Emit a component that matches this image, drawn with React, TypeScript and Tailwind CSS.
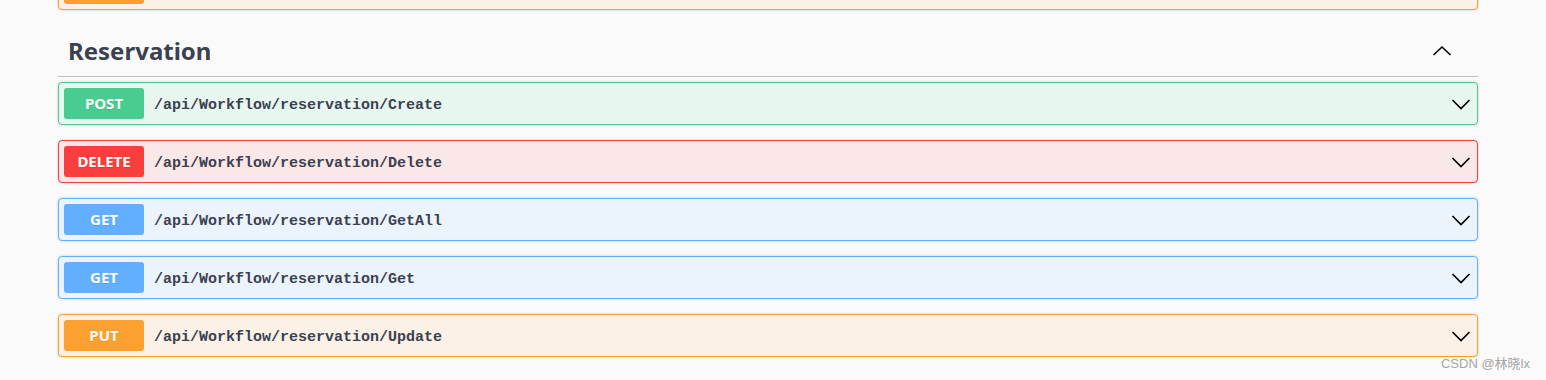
const ops = [
  { method: "POST", path: "/api/Workflow/reservation/Create", tone: "post" },
  { method: "DELETE", path: "/api/Workflow/reservation/Delete", tone: "delete" },
  { method: "GET", path: "/api/Workflow/reservation/GetAll", tone: "get" },
  { method: "GET", path: "/api/Workflow/reservation/Get", tone: "get" },
  { method: "PUT", path: "/api/Workflow/reservation/Update", tone: "put" },
];

const tones: Record<string, { block: string; badge: string }> = {
  post: { block: "border-[#49cc90] bg-[#e8f6f0]", badge: "bg-[#49cc90]" },
  delete: { block: "border-[#f93e3e] bg-[#fae7e7]", badge: "bg-[#f93e3e]" },
  get: { block: "border-[#61affe] bg-[#ebf3fb]", badge: "bg-[#61affe]" },
  put: { block: "border-[#fca130] bg-[#fbf1e6]", badge: "bg-[#fca130]" },
};

function Chevron({ up }: { up?: boolean }) {
  return (
    <svg width="20" height="20" viewBox="0 0 20 20" fill="none" stroke="#000" strokeWidth={1.6}>
      {up ? <polyline points="1.5,14 10,6 18.5,14" /> : <polyline points="1.5,6 10,14.5 18.5,6" />}
    </svg>
  );
}

function OpBlock({ method, path, tone, className = "" }: { method: string; path: string; tone: string; className?: string }) {
  const t = tones[tone];
  return (
    <div className={`h-[43px] border rounded-[4px] shadow-[0_0_3px_rgba(0,0,0,0.19)] flex items-center pl-[5px] pr-[6px] ${t.block} ${className}`}>
      <span
        className={`w-[80px] h-[31px] rounded-[3px] flex items-center justify-center text-white text-[15px] font-bold [text-shadow:0_1px_0_rgba(0,0,0,0.1)] ${t.badge}`}
        style={{ fontFamily: '"Noto Sans", sans-serif' }}
      >
        {method}
      </span>
      <span className="pl-[10px] pt-[5px] text-[15px] font-semibold text-[#3b4151] flex-1" style={{ fontFamily: '"Liberation Mono", monospace' }}>
        {path}
      </span>
      <Chevron />
    </div>
  );
}

export default function App() {
  return (
    <div className="relative h-[380px] overflow-hidden bg-[#fafafa]">
      <div className="ml-[58px] w-[1420px] flex flex-col">
        <OpBlock method="PUT" path="/api/Workflow/reservation/Update" tone="put" className="-mt-[33px] mb-[15px]" />

        <div className="h-[52px] border-b border-[rgba(59,65,81,0.3)] flex items-center pl-[10px] pr-[26px] mb-[5px]">
          <h4 className="flex-1 text-[24px] font-bold text-[#3b4151]" style={{ fontFamily: '"Noto Sans", sans-serif' }}>
            Reservation
          </h4>
          <Chevron up />
        </div>

        <div className="flex flex-col gap-[15px]">
          {ops.map((op, i) => (
            <OpBlock key={i} method={op.method} path={op.path} tone={op.tone} />
          ))}
        </div>
      </div>

      <span
        className="absolute right-[16px] bottom-[7px] text-[13px] text-[#a6a6a6]"
        style={{ fontFamily: '"Liberation Sans", "Noto Sans CJK SC", sans-serif' }}
      >
        CSDN @林晓lx
      </span>
    </div>
  );
}
